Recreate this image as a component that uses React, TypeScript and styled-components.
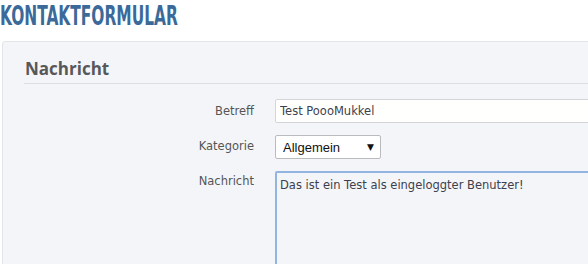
import * as React from 'react';
import styled, { createGlobalStyle } from 'styled-components';

const GlobalStyle = createGlobalStyle`
  html, body {
    margin: 0;
    padding: 0;
    background: #ffffff;
    overflow: hidden;
  }
`

const Page = styled.div`
  width: 760px;
  display: flex;
  flex-direction: column;
`
const Title = styled.h1`
  margin: 0;
  padding: 2px 0 0 0;
  height: 38px;
  box-sizing: border-box;
  font-family: "DejaVu Sans Condensed", "Liberation Sans Narrow", sans-serif;
  font-weight: bold;
  font-size: 27px;
  line-height: 27px;
  color: #3b6a9a;
  transform: scaleX(0.635);
  transform-origin: left center;
`
const Panel = styled.section`
  margin: 3px 0 0 2px;
  min-height: 260px;
  background: #f4f5f9;
  border: 1px solid #e3e5ea;
  border-radius: 3px;
  padding: 16px 0 0 21px;
`
const Legend = styled.h2`
  margin: 0;
  padding: 0 0 3px 1px;
  border-bottom: 1px solid #dcdee3;
  font-family: "Open Sans", "Noto Sans", sans-serif;
  font-weight: bold;
  font-size: 17px;
  line-height: 22px;
  color: #58585a;
`
const Form = styled.form`
  display: grid;
  grid-template-columns: 230px 1fr;
  column-gap: 21px;
  row-gap: 12px;
  padding-top: 15px;
  align-items: start;
`
const Label = styled.label<{ $top: number }>`
  text-align: right;
  font-family: "DejaVu Sans", sans-serif;
  font-size: 11.5px;
  line-height: 14px;
  color: #555;
  padding-top: ${p => p.$top}px;
`
const TextInput = styled.input`
  box-sizing: border-box;
  width: 400px;
  height: 24px;
  padding: 0 4px;
  border: 1px solid #d3d5da;
  border-radius: 2px;
  background: #fffffd;
  font-family: "DejaVu Sans", sans-serif;
  font-size: 11.5px;
  color: #3d3f4d;
  outline: none;
`
const SelectWrap = styled.div`
  position: relative;
  width: 106px;
  height: 24px;
`
const Select = styled.select`
  appearance: none;
  box-sizing: border-box;
  width: 106px;
  height: 24px;
  padding: 0 0 0 7px;
  border: 1px solid #b9bbbf;
  border-radius: 2px;
  background: #ffffff;
  font-family: "Liberation Sans", Arial, sans-serif;
  font-size: 13px;
  color: #111;
  outline: none;
`
const Arrow = styled.span`
  position: absolute;
  right: 7px;
  top: 6px;
  font-family: "DejaVu Sans", sans-serif;
  font-size: 9px;
  line-height: 12px;
  color: #111;
  pointer-events: none;
`
const TextArea = styled.textarea`
  box-sizing: border-box;
  width: 400px;
  height: 140px;
  padding: 5px 3px;
  border: 2px solid #93b4e0;
  border-radius: 2px;
  background: #f4f5f9;
  font-family: "DejaVu Sans", sans-serif;
  font-size: 11.5px;
  line-height: 14px;
  color: #3d3f4d;
  resize: none;
  outline: none;
`

export default function App() {
  return (
    <Page>
      <GlobalStyle />
      <Title>KONTAKTFORMULAR</Title>
      <Panel>
        <Legend>Nachricht</Legend>
        <Form>
          <Label $top={5}>Betreff</Label>
          <TextInput defaultValue="Test PoooMukkel" />
          <Label $top={4}>Kategorie</Label>
          <SelectWrap>
            <Select defaultValue="Allgemein">
              <option>Allgemein</option>
            </Select>
            <Arrow>▼</Arrow>
          </SelectWrap>
          <Label $top={3}>Nachricht</Label>
          <TextArea defaultValue="Das ist ein Test als eingeloggter Benutzer!" />
        </Form>
      </Panel>
    </Page>
  );
}
